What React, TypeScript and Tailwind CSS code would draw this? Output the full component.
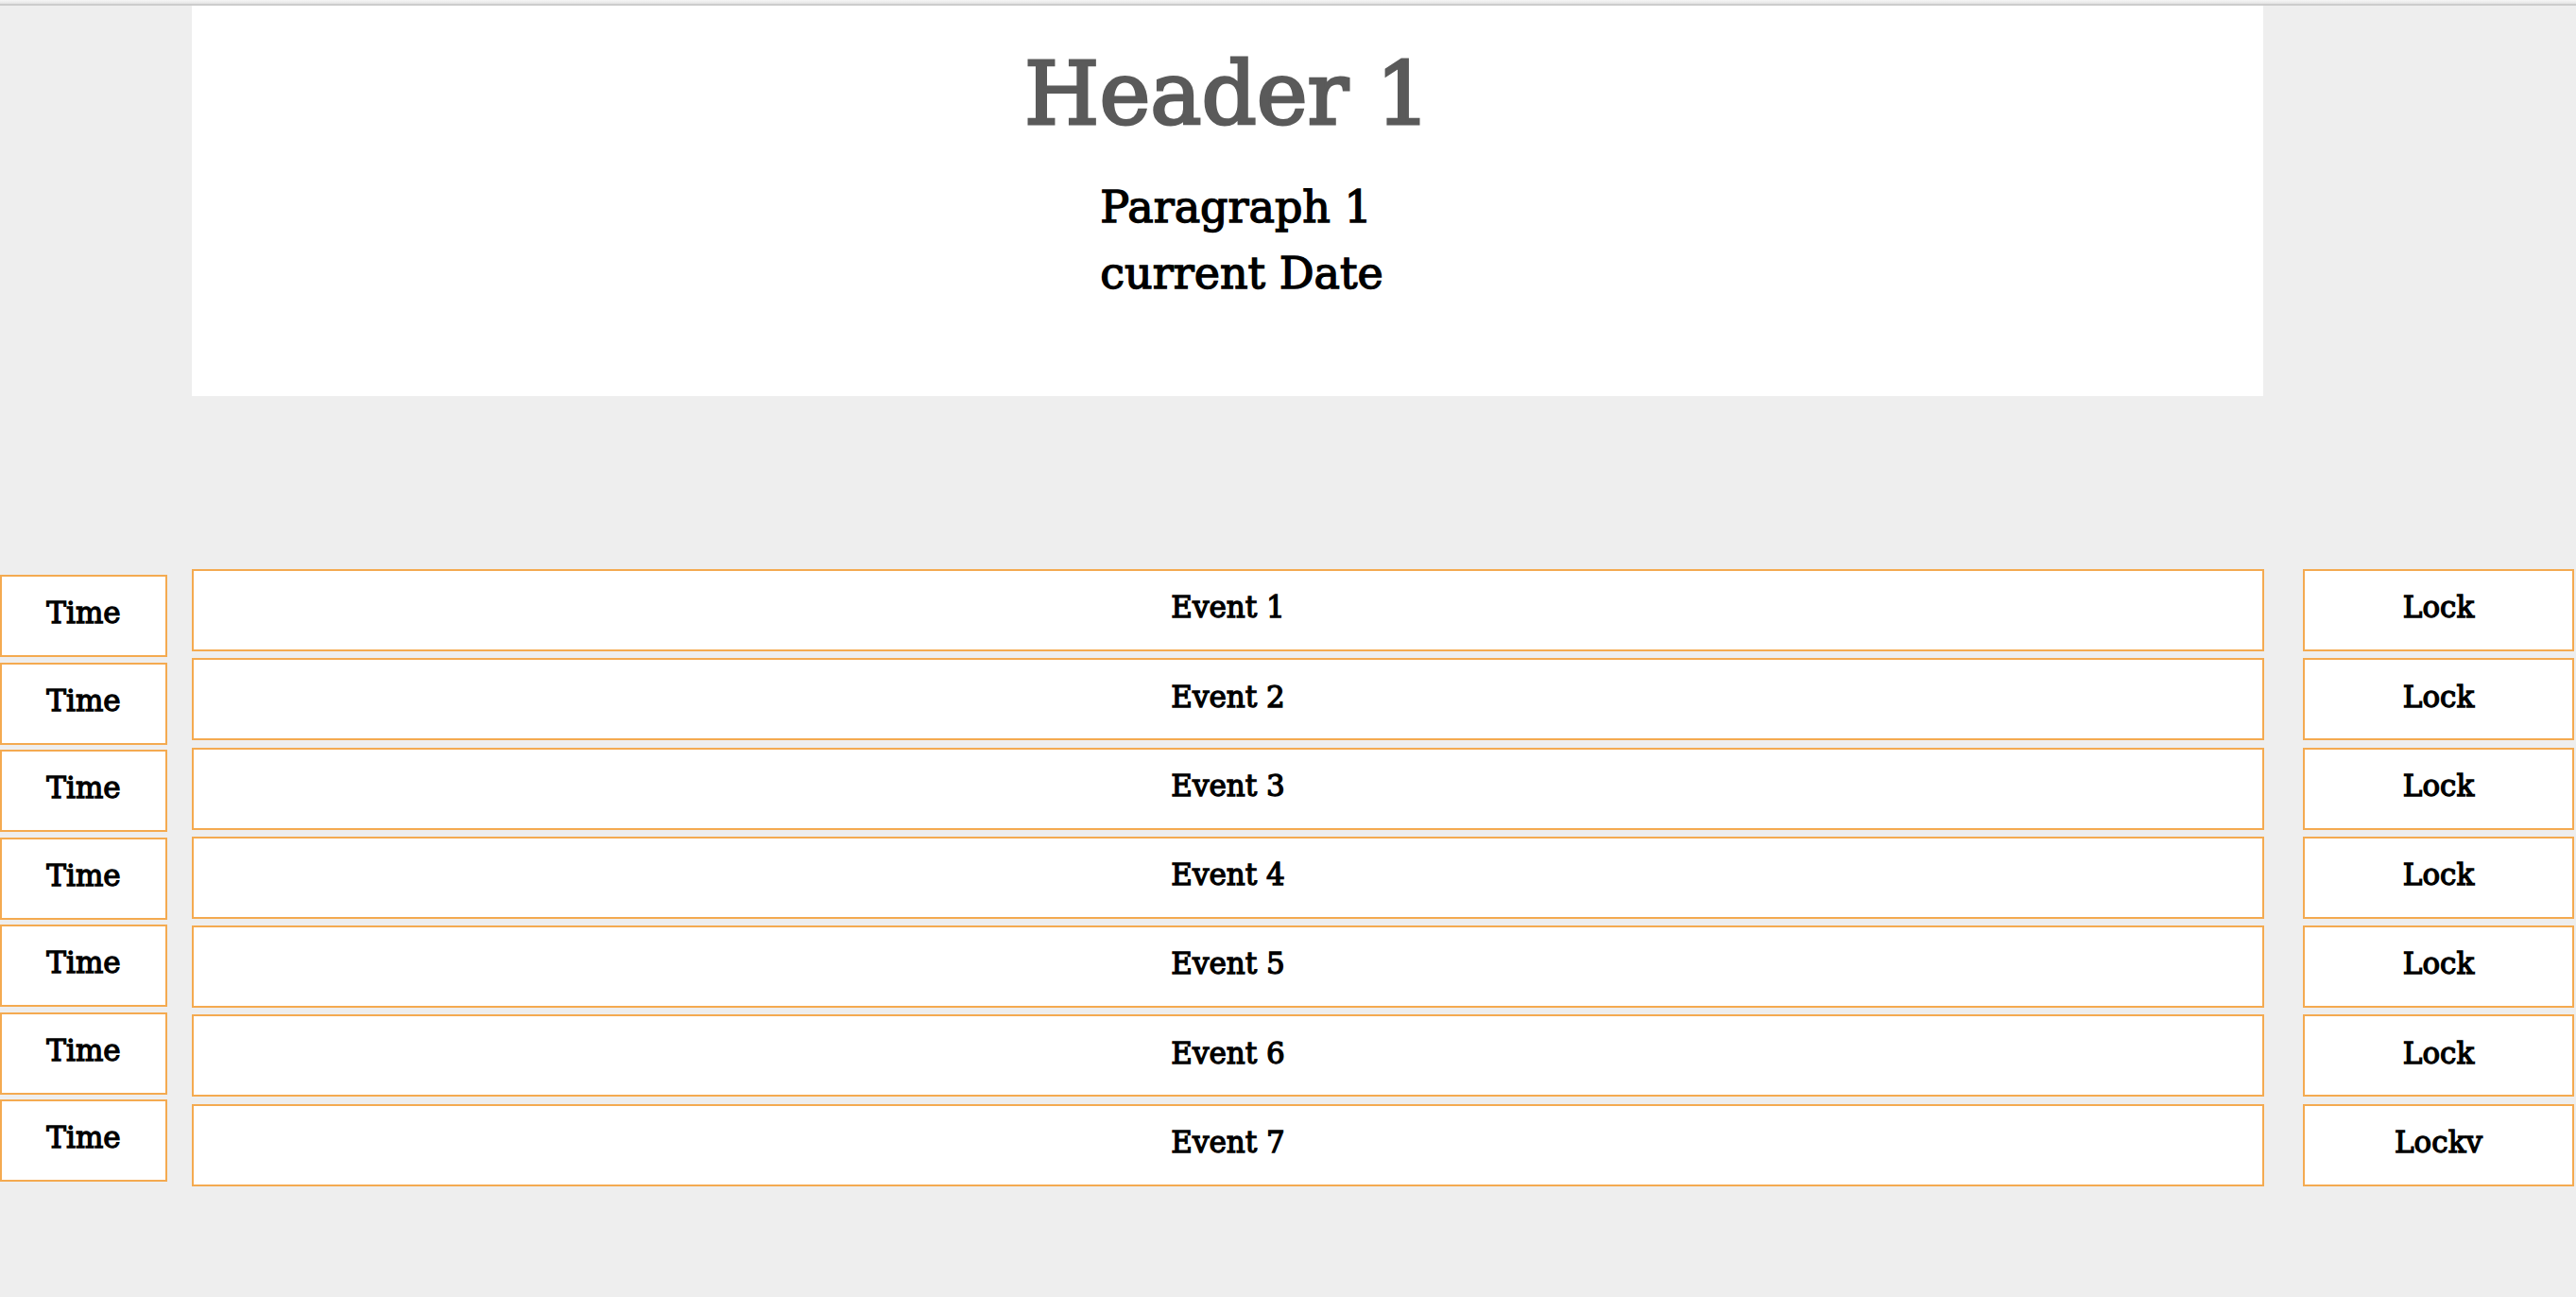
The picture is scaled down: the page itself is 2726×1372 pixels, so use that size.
import React from 'react';

const events = ['Event 1', 'Event 2', 'Event 3', 'Event 4', 'Event 5', 'Event 6', 'Event 7'];
const locks = ['Lock', 'Lock', 'Lock', 'Lock', 'Lock', 'Lock', 'Lockv'];

const cell =
  'h-[87px] shrink-0 flex items-center justify-center pb-[6px] bg-white border-2 border-[#f4aa50] text-[31px] text-black [-webkit-text-stroke:1.3px_#000]';

export default function App() {
  return (
    <div className="min-h-screen bg-[#eeeeee] font-['DejaVu_Serif',serif]">
      {/* top edge */}
      <div className="h-[4px] bg-gradient-to-b from-[#f6f6f6] to-[#e4e4e4]" />
      <div className="h-[2px] bg-[#cccccc]" />

      <header className="ml-[203px] w-[2192px] h-[413px] bg-white flex flex-col items-center pt-[48px]">
        <h1 className="text-[91px] leading-none text-[#5a5a5a] [-webkit-text-stroke:3px_#5a5a5a]">Header 1</h1>
        <div className="mt-[39px] ml-[30px] text-[46px] leading-[70px] text-black text-left [-webkit-text-stroke:1.4px_#000]">
          <p>Paragraph 1</p>
          <p>current Date</p>
        </div>
      </header>

      <main className="mt-[183px] flex items-start">
        <div className="w-[177px] mt-[6px] flex flex-col gap-[5.5px]">
          {events.map((_, i) => (
            <div key={i} className={cell}>
              Time
            </div>
          ))}
        </div>

        <div className="ml-[26px] w-[2193px] flex flex-col gap-[7.3px]">
          {events.map((e) => (
            <div key={e} className={cell}>
              {e}
            </div>
          ))}
        </div>

        <div className="ml-[41px] w-[287px] flex flex-col gap-[7.3px]">
          {locks.map((l, i) => (
            <div key={i} className={cell}>
              {l}
            </div>
          ))}
        </div>
      </main>
    </div>
  );
}
